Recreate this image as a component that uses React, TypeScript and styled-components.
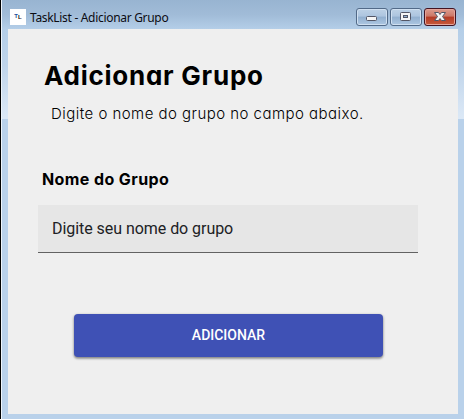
import React from 'react';
import styled, { createGlobalStyle } from 'styled-components';

const GlobalStyle = createGlobalStyle`
  *, *::before, *::after { box-sizing: border-box; }
  html, body { margin: 0; overflow: hidden; }
`;

const Window = styled.div`
  width: 464px;
  height: 419px;
  display: flex;
  flex-direction: column;
  border-left: 1px solid #000;
  padding: 0 6px 5px 7px;
  background:
    linear-gradient(#98b4d1 0, #a1bcd8 15px, #b4cee8 29px, #bfd4ea 65px, #dbe8f6 117px, #dbe8f6 119px, transparent 119px),
    #b9d1ea;
  box-shadow: inset 1px 0 #eef5fc;
`;

const TitleBar = styled.header`
  height: 29px;
  flex: none;
  display: flex;
  align-items: flex-start;
  padding: 8px 2px 0 2px;
`;

const AppIcon = styled.div`
  width: 16px;
  height: 16px;
  margin-top: 1px;
  background: #fff;
  display: flex;
  justify-content: center;
  font: bold 6px/14px 'Liberation Sans', Arial, sans-serif;
  color: #234f9b;
`;

const IconLetter = styled.span`
  color: #111;
  position: relative;
  top: 1px;
`;

const WindowTitle = styled.span`
  margin: 1px 0 0 4px;
  font: 12px/18px 'Noto Sans', sans-serif;
  letter-spacing: -0.31px;
  color: #0b0b12;
  white-space: nowrap;
`;

const Controls = styled.div`
  display: flex;
  gap: 2px;
  margin-left: auto;
`;

const ControlButton = styled.button<{ $close?: boolean }>`
  width: 32px;
  height: 18px;
  padding: 0;
  display: flex;
  border: 1px solid ${(p) => (p.$close ? '#431422' : '#526a88')};
  border-radius: 3px;
  box-shadow: inset 0 0 0 1px ${(p) => (p.$close ? '#e4a49a' : '#d0e0f1')};
  background: ${(p) =>
    p.$close
      ? 'linear-gradient(#dc9b8e 0, #cc7766 45%, #b43a25 50%, #c65a3c 100%)'
      : 'linear-gradient(#bdd1e6 0, #adc5df 45%, #91afcf 50%, #adc7e2 100%)'};
`;

const Content = styled.main`
  width: 450px;
  flex: 1;
  display: flex;
  flex-direction: column;
  align-items: flex-start;
  background: #efefef;
  color: #000;
  font-family: Inter, sans-serif;
  font-feature-settings: 'cv11' 1;
  white-space: nowrap;
`;

const Heading = styled.h1`
  margin: 30px 0 0 36px;
  font-size: 26px;
  font-weight: 650;
  line-height: 34px;
  letter-spacing: 0.75px;
`;

const Description = styled.p`
  margin: 9px 0 0 43px;
  font-size: 15px;
  font-weight: 300;
  line-height: 24px;
  letter-spacing: 0.47px;
`;

const Label = styled.label`
  margin: 42px 0 0 34px;
  font-size: 16px;
  font-weight: 650;
  line-height: 22px;
  letter-spacing: 0.4px;
`;

const Field = styled.input`
  width: 380px;
  height: 48px;
  margin: 15px 0 0 30px;
  padding: 0 14px;
  border: 0;
  border-bottom: 1px solid #626262;
  border-radius: 0;
  outline: 0;
  background: #e6e6e6;
  font: 16px Roboto, sans-serif;
  letter-spacing: -0.05px;
  &::placeholder { color: #202124; opacity: 1; }
`;

const SubmitButton = styled.button`
  width: 309px;
  height: 43px;
  margin: 61px 0 0 66px;
  padding: 0 0 2px;
  border: 0;
  border-radius: 4px;
  background: #3f51b5;
  box-shadow: 0 1px 3px rgba(0, 0, 0, 0.4), 0 2px 2px rgba(0, 0, 0, 0.16);
  color: #fff;
  font: 500 14px Roboto, sans-serif;
`;

export default function App() {
  return (
    <>
      <GlobalStyle />
      <Window>
        <TitleBar>
          <AppIcon>T<IconLetter>L</IconLetter></AppIcon>
          <WindowTitle>TaskList - Adicionar Grupo</WindowTitle>
          <Controls>
            <ControlButton aria-label="Minimizar">
              <svg width="30" height="16">
                <rect x="9.5" y="7.5" width="10" height="4" rx="1" fill="#f5f5f5" stroke="#535666" />
              </svg>
            </ControlButton>
            <ControlButton aria-label="Maximizar">
              <svg width="30" height="16">
                <rect x="9.5" y="3.5" width="10" height="8" rx="1" fill="#f5f5f5" stroke="#535666" />
                <rect x="12.5" y="6.5" width="4" height="2" fill="#91afcf" stroke="#535666" />
              </svg>
            </ControlButton>
            <ControlButton $close aria-label="Fechar">
              <svg width="30" height="16">
                <path d="M9.5 3.5h4l1.5 2 1.5-2h4l-3 4 3 4h-4l-1.5-2-1.5 2h-4l3-4z" fill="#f5f5f5" stroke="#535666" strokeLinejoin="round" />
              </svg>
            </ControlButton>
          </Controls>
        </TitleBar>
        <Content>
          <Heading>Adicionar Grupo</Heading>
          <Description>Digite o nome do grupo no campo abaixo.</Description>
          <Label htmlFor="grupo">Nome do Grupo</Label>
          <Field id="grupo" placeholder="Digite seu nome do grupo" />
          <SubmitButton>ADICIONAR</SubmitButton>
        </Content>
      </Window>
    </>
  );
}
